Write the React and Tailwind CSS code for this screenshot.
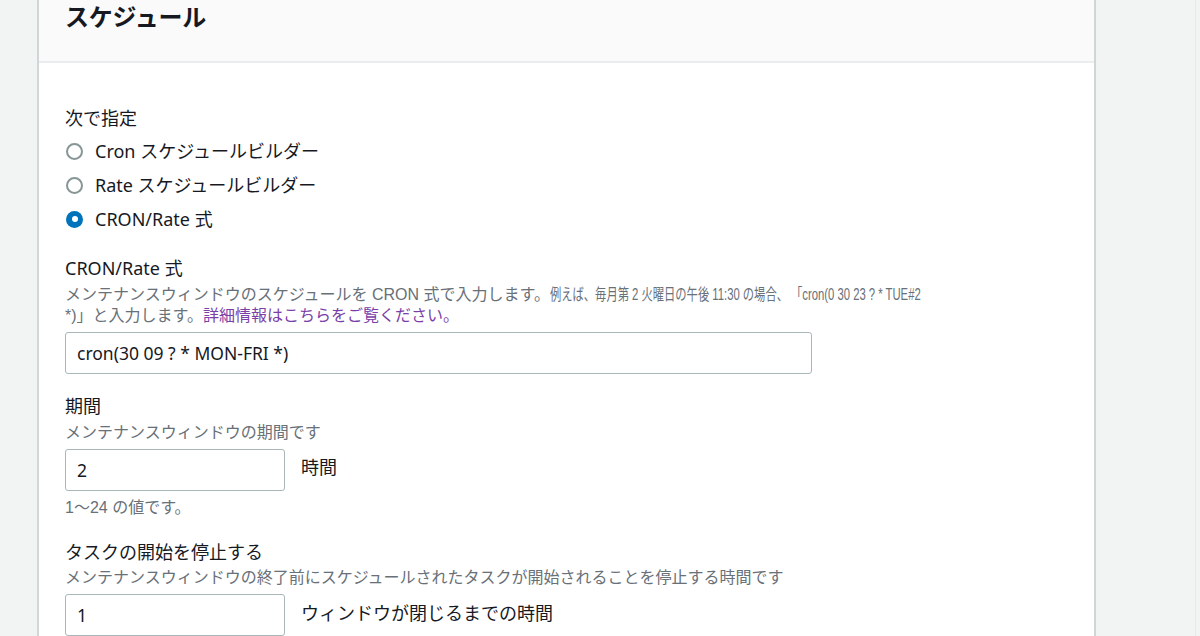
import React from "react";

const font = { fontFamily: '"Noto Sans", "Noto Sans CJK JP", sans-serif' };
const descFont = { fontFamily: '"Liberation Sans", "Noto Sans CJK JP", sans-serif' };

function Radio({ checked, label }) {
  return (
    <div className="flex items-center h-[34px]">
      {checked ? (
        <span className="ml-[1px] w-[17px] h-[17px] rounded-full bg-[#0073bb] flex items-center justify-center">
          <span className="w-[6px] h-[6px] rounded-full bg-white" />
        </span>
      ) : (
        <span className="ml-[1px] w-[17px] h-[17px] rounded-full border-2 border-[#879596] bg-white" />
      )}
      <span className="ml-[12px] text-[18px] text-[#16191f] leading-[24px]">{label}</span>
    </div>
  );
}

function Desc({ children, className = "" }) {
  return (
    <div className={"text-[16px] leading-[21px] text-[#687078] " + className} style={descFont}>
      {children}
    </div>
  );
}

export default function App() {
  return (
    <div className="w-[1200px] h-[636px] overflow-hidden bg-[#f2f3f3] flex" style={font}>
      <div className="w-[37px] shrink-0" />
      <div className="w-[1059px] shrink-0 bg-white border-l-2 border-r-2 border-[#d0d5d5] flex flex-col">
        <div className="h-[63px] shrink-0 bg-[#fafafa] border-b-2 border-[#eaeded] pl-[26px]">
          <h2 className="text-[24px] font-bold leading-[33px] text-[#16191f] tracking-[-0.2px]">スケジュール</h2>
        </div>
        <div className="pl-[26px] flex flex-col">
          <div className="mt-[43px] text-[18px] leading-[24px] text-[#16191f]">次で指定</div>
          <div className="mt-[4px] flex flex-col">
            <Radio label="Cron スケジュールビルダー" />
            <Radio label="Rate スケジュールビルダー" />
            <Radio checked label="CRON/Rate 式" />
          </div>

          <div className="mt-[20px] text-[18px] leading-[24px] text-[#16191f]">CRON/Rate 式</div>
          <Desc className="mt-[4px]">
            <div className="whitespace-nowrap">
              メンテナンスウィンドウのスケジュールを CRON 式で入力します。
              <span className="inline-block origin-left scale-x-[0.705] whitespace-nowrap">
                例えば、毎月第 2 火曜日の午後 11:30 の場合、 「cron(0 30 23 ? * TUE#2
              </span>
            </div>
            <div>
              *)」と入力します。<span className="text-[#7b3fa8]">詳細情報はこちらをご覧ください。</span>
            </div>
          </Desc>
          <div className="mt-[6px] w-[747px] h-[42px] border border-[#aab7b8] rounded-[3px] flex items-center pl-[11px] text-[17.5px] text-[#16191f]">
            cron(30 09 ? * MON-FRI *)
          </div>

          <div className="mt-[20px] text-[18px] leading-[24px] text-[#16191f]">期間</div>
          <Desc className="mt-[4px]">メンテナンスウィンドウの期間です</Desc>
          <div className="mt-[6px] flex items-center">
            <div className="w-[220px] h-[42px] border border-[#aab7b8] rounded-[3px] flex items-center pl-[11px] text-[17.5px] text-[#16191f]">2</div>
            <span className="ml-[16px] text-[18px] text-[#16191f] -mt-[6px]">時間</span>
          </div>
          <Desc className="mt-[6px]">1〜24 の値です。</Desc>

          <div className="mt-[22px] text-[18px] leading-[24px] text-[#16191f]">タスクの開始を停止する</div>
          <Desc className="mt-[3px]">メンテナンスウィンドウの終了前にスケジュールされたタスクが開始されることを停止する時間です</Desc>
          <div className="mt-[6px] flex items-center">
            <div className="w-[220px] h-[42px] border border-[#aab7b8] rounded-[3px] flex items-center pl-[11px] text-[17.5px] text-[#16191f]">1</div>
            <span className="ml-[16px] text-[18px] text-[#16191f] -mt-[4px]">ウィンドウが閉じるまでの時間</span>
          </div>
        </div>
      </div>
      <div className="flex-1 flex">
        <div className="w-[100px] border-r border-[#e6e9e9]" />
      </div>
    </div>
  );
}
